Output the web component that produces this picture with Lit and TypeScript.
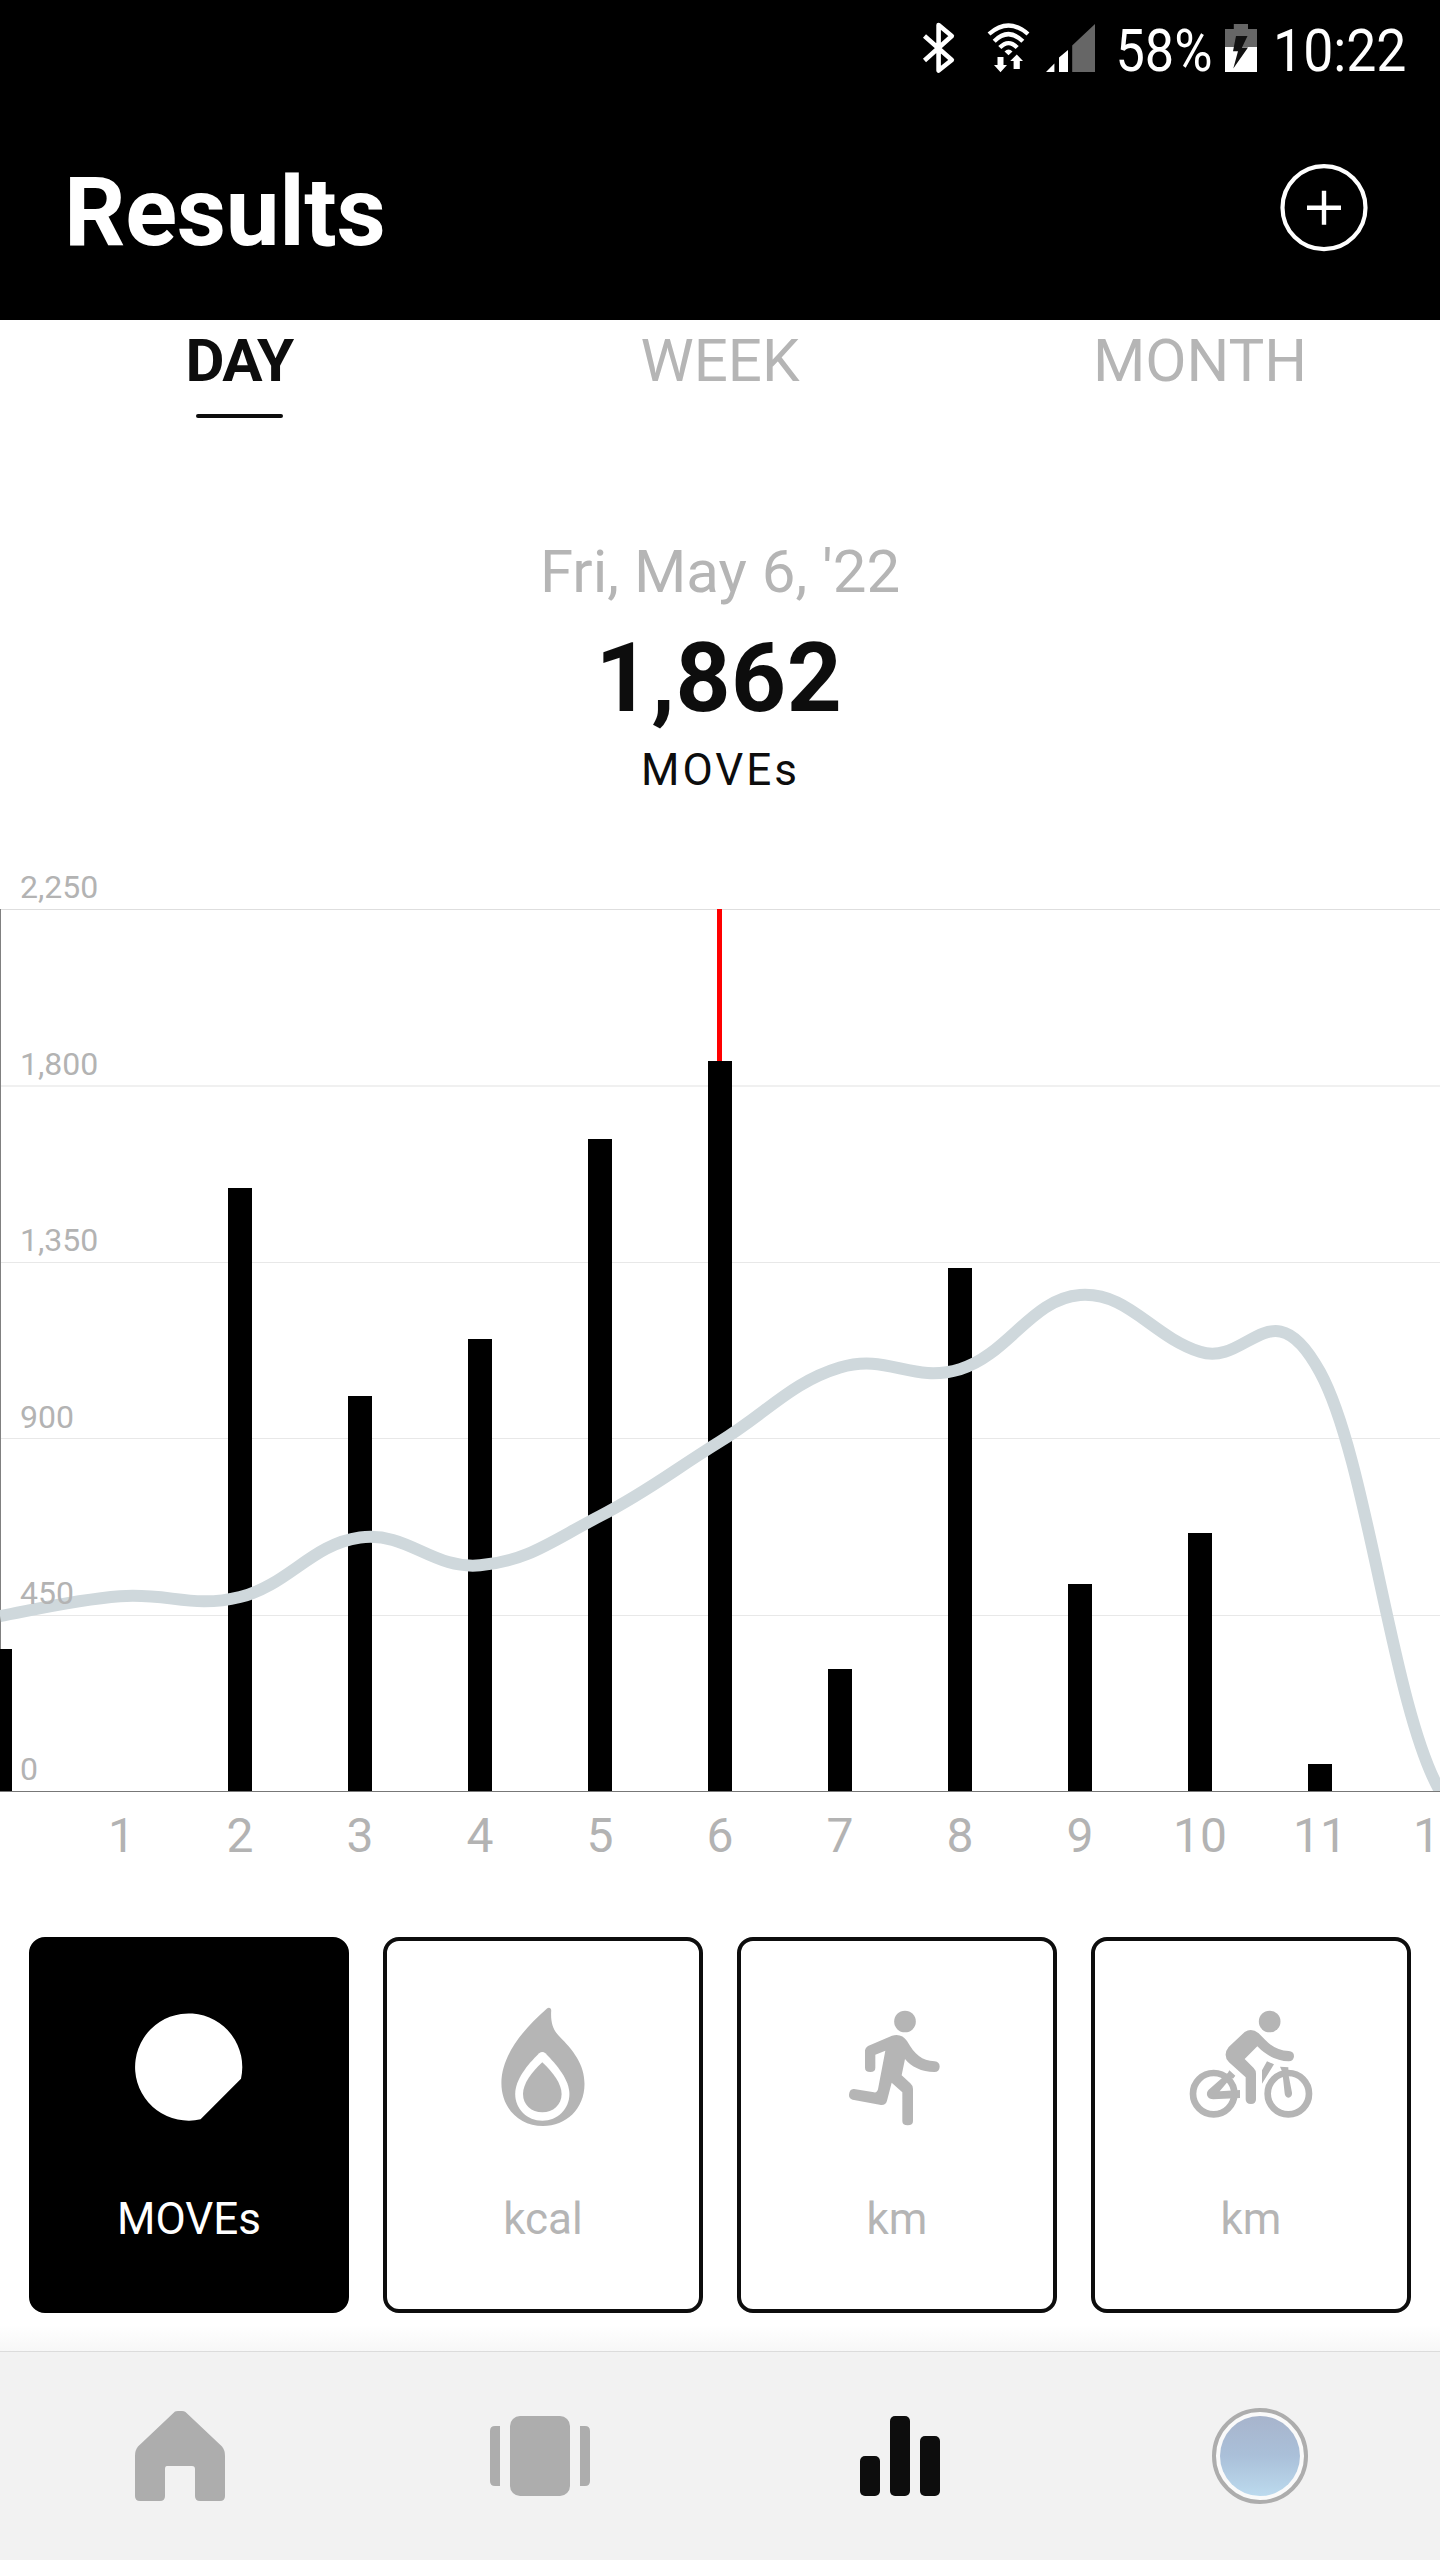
import { LitElement, html, svg, css } from "lit";
import { customElement, property } from "lit/decorators.js";
import { classMap } from "lit/directives/class-map.js";

@customElement("status-bar")
class StatusBar extends LitElement {
  static styles = css`
    :host { display: flex; justify-content: flex-end; height: 76px; padding: 20px 35px 0 0; box-sizing: border-box; }
    svg { display: block; overflow: visible; flex: none; }
    .bt { margin-right: 32px; }
    .wifi { margin-right: 15px; }
    .signal { margin-right: 23px; }
    .percent { margin-right: 13px; }
    .battery { margin-right: 19px; }
    text { font-family: Roboto, sans-serif; font-size: 60px; fill: #fff; }
  `;
  render() {
    return html`
      <svg class="bt" width="33" height="56" fill="none" stroke="#fff" stroke-width="4.6" stroke-linejoin="round">
        <path d="M2.5 16 L29.8 40 L16.6 50.5 V5 L29.8 16 L2.5 40.5" />
      </svg>
      <svg class="wifi" width="44" height="56" fill="none" stroke="#fff" stroke-width="4.3">
        <path d="M2 14 Q21.5 -3 41 14 M7.2 21.3 Q21.5 7 35.8 21.3 M12.8 27.6 Q21.5 18.5 30.2 27.6" />
        <path fill="#fff" stroke="none" d="M21.5 35.3 L17.5 31.6 Q21.5 27.4 25.5 31.6Z M10.5 37 H16.5 V45 H20 L13.5 52.3 L7 45 H10.5Z M29.8 34.5 L36 41 H32.8 V49 H26.6 V41 H23.2Z" />
      </svg>
      <svg class="signal" width="50" height="56">
        <path fill="#fff" d="M0 52 L8.4 43.5 V52Z M13 52 V37.5 L22 30 V52Z" />
        <path fill="#666" d="M26.2 52 V25.5 L49 4 V52Z" />
      </svg>
      <svg class="percent" width="92" height="56"><text x="-3.5" y="51" textLength="97" lengthAdjust="spacingAndGlyphs">58%</text></svg>
      <svg class="battery" width="34" height="56">
        <path fill="#666" d="M1 27 V9 H9.8 V4 H24 V9 H33 V27Z" />
        <path fill="#fff" d="M1 27 H33 V52 H1Z" />
        <path fill="#111" d="M12 16 H23.5 L18 27.5 H24 L9.3 48.5 L14 31.3 H9Z" />
      </svg>
      <svg class="time" width="128" height="56"><text x="-4" y="51" textLength="133.5" lengthAdjust="spacingAndGlyphs">10:22</text></svg>
    `;
  }
}

const HOURLY = [362, 0, 1538, 1007, 1153, 1662, 1862, 311, 1334, 528, 658, 68];
const TREND_Y = [1616, 1596.3, 1597, 1537.5, 1565.3, 1516, 1441.5, 1367.5, 1369.2, 1295, 1351.8, 1372, 1791, 1791];
const TOP = 860;
const BASE = 1791;
const STEP = 120;

@customElement("moves-chart")
class MovesChart extends LitElement {
  static styles = css`
    :host { display: block; height: 1010px; }
    svg { display: block; }
    text { font-family: Roboto, sans-serif; fill: #b3b3b3; }
    .y { font-size: 32px; }
    .x { font-size: 48px; text-anchor: middle; }
  `;
  private trend() {
    const p = TREND_Y;
    let d = `M0 ${p[0]}`;
    for (let i = 1; i <= 12; i++) {
      const before = p[Math.max(i - 2, 0)];
      const c1x = (i - 1) * STEP + (i === 1 ? 0.2 : 0.4) * STEP;
      const c1y = p[i - 1] + (p[i] - before) * 0.2;
      const c2x = i * STEP - 0.4 * STEP;
      const c2y = p[i] - (p[i + 1] - p[i - 1]) * 0.2;
      d += ` C${c1x} ${c1y} ${c2x} ${c2y} ${i * STEP} ${p[i]}`;
    }
    return d;
  }
  render() {
    const grid = [
      [909, 1, "#dedede"], [1085, 2, "#f0f0f0"], [1262, 1, "#e8e8e8"], [1438, 1, "#e8e8e8"], [1615, 1, "#e8e8e8"],
    ] as const;
    const labels = ["2,250", "1,800", "1,350", "900", "450", "0"];
    return html`
      <svg width="1440" height="1010" viewBox="0 ${TOP} 1440 1010">
        <defs><clipPath id="plot"><rect x="0" y="909" width="1440" height="882" /></clipPath></defs>
        ${grid.map(([y, h, c]) => svg`<rect x="0" y=${y} width="1440" height=${h} fill=${c} />`)}
        <rect x="0" y="909" width="1" height="882" fill="#808080" />
        ${HOURLY.map((v, i) => {
          const y = Math.round(BASE - v * 0.392);
          return svg`<rect x=${i * STEP - 12} y=${y} width="24" height=${BASE - y} />`;
        })}
        <rect x="717" y="909" width="5" height="152" fill="#f00" />
        <path d=${this.trend()} clip-path="url(#plot)" fill="none" stroke="#cfd8dc" stroke-width="12" />
        <rect x="0" y="1791" width="1440" height="1" fill="#777" />
        ${labels.map((t, i) => svg`<text class="y" x="20" y=${898.3 + i * 176.4}>${t}</text>`)}
        ${Array.from({ length: 12 }, (_, i) => svg`<text class="x" x=${(i + 1) * STEP + (i === 0 ? 1.5 : 0)} y="1852">${i + 1}</text>`)}
      </svg>
    `;
  }
}

const metricIcons: Record<string, unknown> = {
  moves: html`<svg width="132" height="120"><path d="M118 71.7 A53.6 53.6 0 1 0 77.6 112.3Z" /></svg>`,
  flame: html`<svg width="132" height="120">
    <path d="M70 1.5 C72 0 74.5 1 74.2 4 C73.5 15 76 23 82 29 C96 43 107.5 57 107.5 77 C107.5 102 89 119 66 119 C42 119 24.4 101 24.4 76 C24.4 50 44 24 70 1.5Z" />
    <path fill="#fff" d="M62.2 46.3 Q65.3 43.5 68.4 46.3 C80 58 92.4 73 92.4 87 C92.4 102 80.5 113.7 65.3 113.7 C50 113.7 38.2 102 38.2 87 C38.2 73 50 58 62.2 46.3Z" />
    <path d="M65.3 55.3 C76 65 84.6 77 84.6 87 C84.6 98 76 105.3 65.3 105.3 C54.5 105.3 46 98 46 87 C46 77 54.5 65 65.3 55.3Z" />
  </svg>`,
  run: html`<svg width="132" height="120" viewBox="-27 51 396 360">
    <circle cx="195" cy="94.5" r="32.5" />
    <path d="M156 137 Q185 129 201 153 C225 195 245 211 284 214 Q299 216 299 230 Q298 246 283 246 C245 246 213 230 195 207 L185 256 L211 280 Q219 287 219 297 V393 Q219 406 203 406 Q187 406 187 393 V307 L155 278 L141 332 Q137 346 123 345 L38 329 Q27 326 27 315 Q28 296 42 297 L102 307 Q111 309 114 298 L136 182 L106 194 V233 Q106 246 91 246 Q75 246 75 233 V181 Q76 173 84 168Z" />
  </svg>`,
  bike: html`<svg width="132" height="120" viewBox="1035 51 396 360">
    <circle cx="1289" cy="94.5" r="32.5" />
    <path d="M1214 126 Q1235 113 1256 130 L1276 150 Q1305 181 1346 183 Q1362 184 1362 199 Q1361 214 1346 214 Q1292 211 1252 169 L1214 207 L1241 234 Q1248 241 1248 251 V328 Q1248 342 1233 342 Q1217 342 1217 328 V262 L1167 217 Q1147 195 1166 171Z" />
    <circle cx="1121" cy="311" r="62" fill="none" stroke="#b5b5b5" stroke-width="20" />
    <circle cx="1345" cy="311" r="62" fill="none" stroke="#b5b5b5" stroke-width="20" />
    <path d="M1168 241 L1186 257 L1179 266 L1173 263 L1139 304 L1200 300 V324 L1120 328 Q1107 328 1102 318 Q1098 308 1106 299 L1164 248Z" />
    <path d="M1281 214 L1302 223 L1266 281 V241Z M1320 230 L1345 232 V240 L1344 246 L1356 308 Q1357 322 1345 323 Q1335 322 1334 310 L1327 246Z" />
  </svg>`,
};

@customElement("metric-card")
class MetricCard extends LitElement {
  static styles = css`
    :host { display: block; }
    .card {
      box-sizing: border-box; width: 320px; height: 376px; border: 4px solid #0d0d0d; border-radius: 16px;
      padding-top: 66px; display: flex; flex-direction: column; align-items: center;
      color: #b5b5b5; fill: #b5b5b5; background: #fff;
    }
    .card.active { background: #000; border-color: #000; color: #fff; fill: #fff; }
    svg { display: block; }
    .label { margin-top: 66px; font: 44px/52px Roboto, sans-serif; }
  `;
  @property() icon = "moves";
  @property() label = "";
  @property({ type: Boolean }) active = false;
  render() {
    return html`<div class=${classMap({ card: true, active: this.active })}>
      ${metricIcons[this.icon]}
      <div class="label">${this.label}</div>
    </div>`;
  }
}

@customElement("bottom-nav")
class BottomNav extends LitElement {
  static styles = css`
    :host { display: grid; grid-template-columns: repeat(4, 1fr); height: 209px; box-sizing: border-box; border-top: 1px solid #dcdcdc; background: #f2f2f2; justify-items: center; align-items: center; }
    svg { display: block; }
  `;
  render() {
    return html`
      <svg width="100" height="100" fill="#adadad">
        <path d="M45 5.5 Q46 5 48 5 H52 Q54 5 55.5 6 L92 40.5 Q95 44 95 50 V90 Q95 95 90 95 H70 Q65 95 65 90 V63 Q65 60 62 60 H37 Q35 60 35 63 V90 Q35 95 30 95 H10 Q5 95 5 90 V50 Q5 44 8 40.5Z" />
      </svg>
      <svg width="100" height="100" fill="#adadad">
        <rect x="20" y="10" width="60" height="80" rx="10" />
        <path d="M10 20 V80 H5 Q0 80 0 75 V25 Q0 20 5 20Z M90 20 V80 H95 Q100 80 100 75 V25 Q100 20 95 20Z" />
      </svg>
      <svg width="100" height="100" fill="#0d0d0d">
        <rect x="10" y="50" width="20" height="40" rx="5" />
        <rect x="40" y="10" width="20" height="80" rx="5" />
        <rect x="70" y="30" width="20" height="60" rx="5" />
      </svg>
      <svg width="100" height="100">
        <defs>
          <linearGradient id="sky" x1="0" y1="0" x2="0" y2="1">
            <stop offset="0" stop-color="#a7b4cc" /><stop offset="0.5" stop-color="#aac0d9" /><stop offset="1" stop-color="#bcdaee" />
          </linearGradient>
        </defs>
        <circle cx="50" cy="50" r="46" fill="#fafafa" stroke="#adadad" stroke-width="4" />
        <circle cx="50" cy="50" r="40" fill="url(#sky)" />
      </svg>
    `;
  }
}

@customElement("app-root")
class AppRoot extends LitElement {
  static styles = css`
    :host { display: flex; flex-direction: column; width: 1440px; height: 2560px; overflow: hidden; background: #fff; font-family: Roboto, sans-serif; color: #0d0d0d; }
    .header { height: 320px; flex: none; background: #000; color: #fff; }
    .title-row { display: flex; justify-content: space-between; align-items: flex-start; padding: 80px 72px 0 64px; }
    .title { margin: 0; font-size: 96px; line-height: 112px; font-weight: 700; letter-spacing: -0.3px; }
    .add { display: block; margin-top: 7px; }
    .tabs { display: grid; grid-template-columns: repeat(3, 480px); padding-top: 6px; height: 92px; flex: none; }
    .tab { display: flex; flex-direction: column; align-items: center; font-size: 60px; line-height: 70px; color: #b5b5b5; }
    .tab.selected { font-weight: 700; color: #0d0d0d; letter-spacing: -1.6px; padding-right: 2px; }
    .tab.selected::after { content: ""; width: 87px; height: 4px; margin-top: 18px; border-radius: 2px; background: #0d0d0d; }
    .summary { padding-top: 119px; height: 323px; flex: none; text-align: center; }
    .date { font-size: 60px; line-height: 70px; color: #b5b5b5; }
    .total { margin-top: 15px; font-size: 96px; line-height: 112px; font-weight: 700; letter-spacing: 0.6px; padding-right: 2px; }
    .unit { margin-top: 10px; font-size: 44px; line-height: 52px; letter-spacing: 3px; padding-left: 1px; }
    .cards { display: flex; gap: 34px; padding: 67px 29px 0; flex: none; }
    .shade { height: 38px; flex: none; background: linear-gradient(#fff 30%, #f7f7f7); }
    bottom-nav { flex: none; }
  `;
  render() {
    return html`
      <header class="header">
        <status-bar></status-bar>
        <div class="title-row">
          <h1 class="title">Results</h1>
          <svg class="add" width="88" height="90" fill="none" stroke="#fff">
            <circle cx="44" cy="44.7" r="41.5" stroke-width="4.2" />
            <path d="M27 44.7 H61 M44 27.7 V61.7" stroke-width="4.4" />
          </svg>
        </div>
      </header>
      <nav class="tabs">
        <div class="tab selected">DAY</div>
        <div class="tab">WEEK</div>
        <div class="tab">MONTH</div>
      </nav>
      <section class="summary">
        <div class="date">Fri, May 6, '22</div>
        <div class="total">1,862</div>
        <div class="unit">MOVEs</div>
      </section>
      <moves-chart></moves-chart>
      <section class="cards">
        <metric-card icon="moves" label="MOVEs" active></metric-card>
        <metric-card icon="flame" label="kcal"></metric-card>
        <metric-card icon="run" label="km"></metric-card>
        <metric-card icon="bike" label="km"></metric-card>
      </section>
      <div class="shade"></div>
      <bottom-nav></bottom-nav>
    `;
  }
}
